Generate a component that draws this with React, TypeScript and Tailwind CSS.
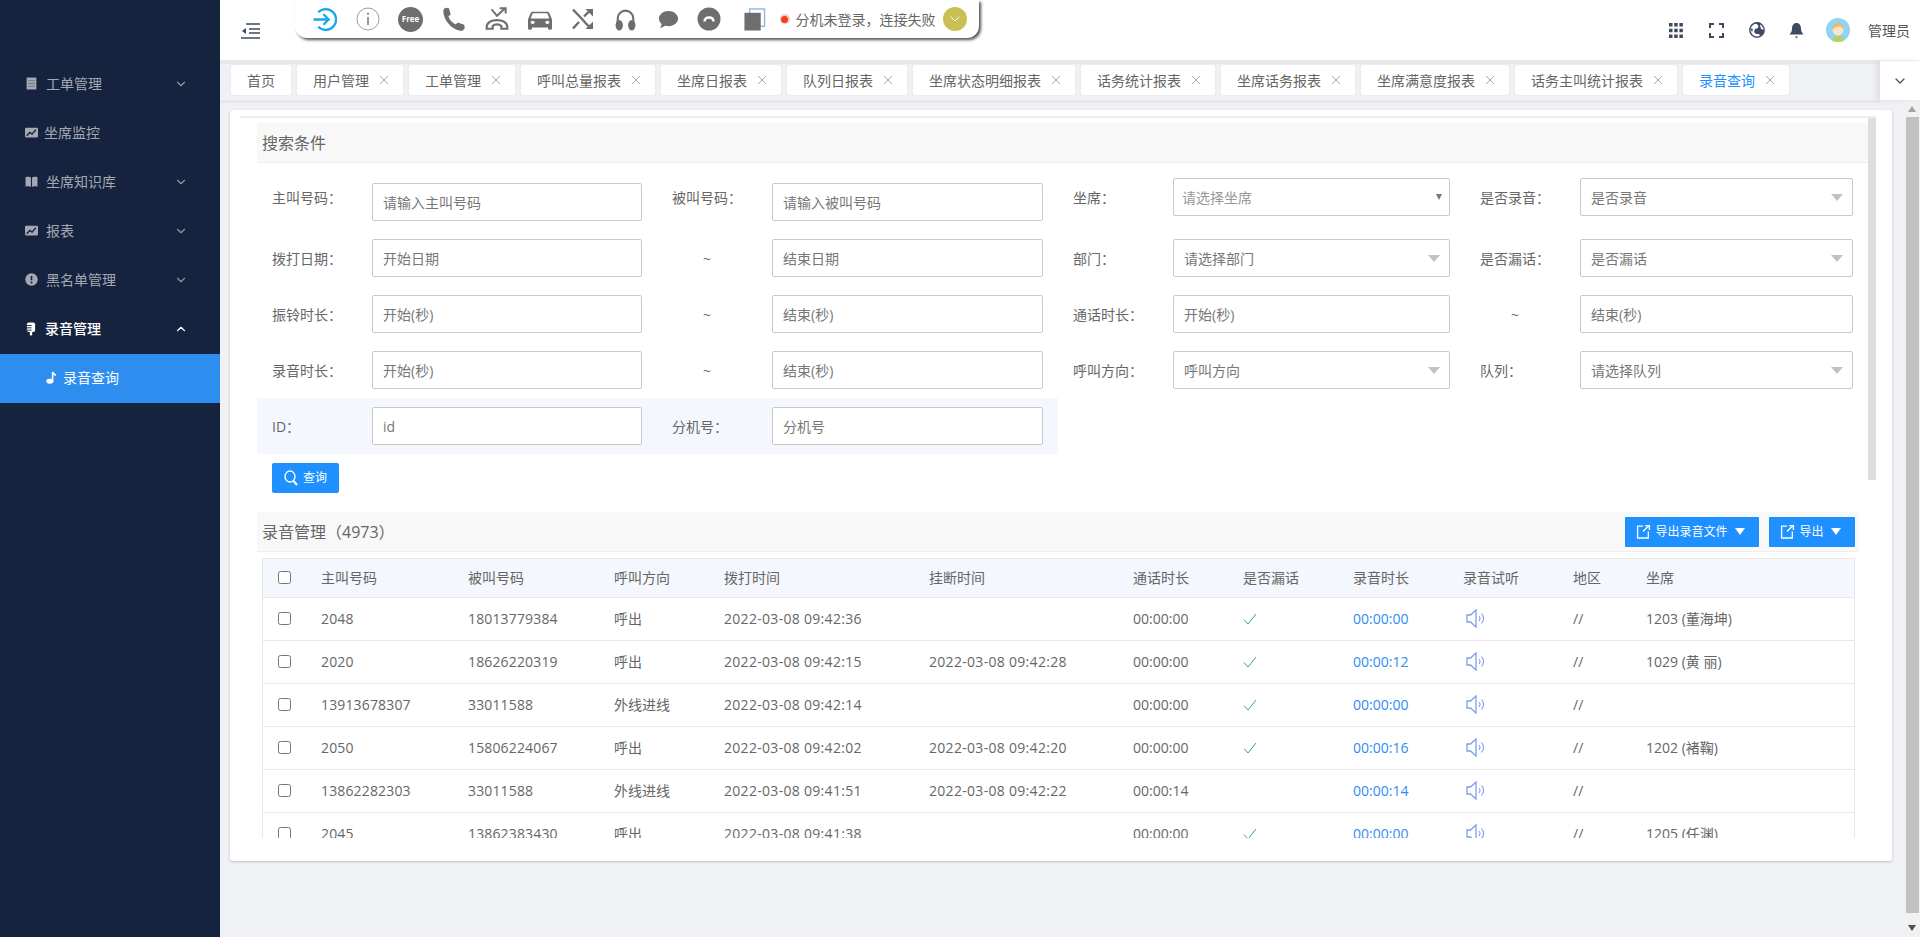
import { ChevronDown, ChevronUp } from 'lucide-react';
import type { ReactNode } from 'react';

const GRAY = '#6e6e6e';

function Svg({ size = 24, w, h, children }: { size?: number; w?: number; h?: number; children: ReactNode }) {
  return (
    <svg width={w ?? size} height={h ?? size} viewBox="0 0 24 24" preserveAspectRatio="none" className="shrink-0">
      {children}
    </svg>
  );
}

// 侧边栏小图标
function DocIcon() {
  return (
    <Svg size={13}>
      <rect x="3" y="1" width="18" height="22" fill="#a3a8b3" />
      <path d="M6 7h12M6 12h12M6 17h12" stroke="#6f7685" strokeWidth="2" />
    </Svg>
  );
}
function ChartIcon() {
  return (
    <Svg size={13}>
      <rect x="0" y="3" width="24" height="18" rx="2" fill="#a3a8b3" />
      <path d="M3 18l6-6 4 3 7-8" stroke="#16233f" strokeWidth="2.6" fill="none" />
    </Svg>
  );
}
function BookIcon() {
  return (
    <Svg size={13}>
      <path d="M1 4c4-1.500 8-1 10 .5V22c-2-1.500-6-2-10-.5zM23 4c-4-1.500-8-1-10 .5V22c2-1.500 6-2 10-.5z" fill="#a3a8b3" />
    </Svg>
  );
}
function AlertIcon() {
  return (
    <Svg size={13}>
      <circle cx="12" cy="12" r="11.500" fill="#a3a8b3" />
      <path d="M12 5.500v8" stroke="#16233f" strokeWidth="3" />
      <circle cx="12" cy="17.500" r="1.800" fill="#16233f" />
    </Svg>
  );
}
function MicIcon() {
  return (
    <Svg size={14}>
      <rect x="5" y="1" width="14" height="16" rx="3" fill="#fff" />
      <path d="M5 6h8M5 10h8M5 14h8" stroke="#16233f" strokeWidth="1.600" />
      <path d="M12 17v6" stroke="#fff" strokeWidth="4" />
    </Svg>
  );
}
function NoteIcon() {
  return (
    <Svg size={13}>
      <ellipse cx="9" cy="19" rx="6.500" ry="4.500" fill="#fff" />
      <path d="M14 19V2c1 3 3 4 6 6" stroke="#fff" strokeWidth="3" fill="none" />
    </Svg>
  );
}

const MENU = [
  { label: '工单管理', icon: <DocIcon />, arrow: true, textX: 'pl-[8px]' },
  { label: '坐席监控', icon: <ChartIcon />, arrow: false, textX: 'pl-[6px]' },
  { label: '坐席知识库', icon: <BookIcon />, arrow: true, textX: 'pl-[8px]' },
  { label: '报表', icon: <ChartIcon />, arrow: true, textX: 'pl-[8px]' },
  { label: '黑名单管理', icon: <AlertIcon />, arrow: true, textX: 'pl-[8px]' },
];

function Sidebar() {
  return (
    <aside className="w-[220px] shrink-0 bg-[#16233f] pt-[60px] text-[14px]">
      {MENU.map(item => (
        <div key={item.label} className="flex h-[49px] items-center pb-[2px] pl-[25px] pr-[32px] text-[#a3a8b3]">
          {item.icon}
          <span className={`flex-1 ${item.textX}`}>{item.label}</span>
          {item.arrow && <ChevronDown size={14} color="#8c98ac" />}
        </div>
      ))}
      <div className="flex h-[49px] items-center pb-[2px] pl-[24px] pr-[32px] font-medium text-white">
        <MicIcon />
        <span className="flex-1 pl-[7px]">录音管理</span>
        <ChevronUp size={14} color="#fff" />
      </div>
      <div className="flex h-[49px] items-center bg-[#2e8ef0] pb-[2px] pl-[45px] text-white">
        <NoteIcon />
        <span className="pl-[5px]">录音查询</span>
      </div>
    </aside>
  );
}

function ToolIcon({ children, className = '' }: { children: ReactNode; className?: string }) {
  return <div className={`flex w-[43px] shrink-0 items-center justify-center ${className}`}>{children}</div>;
}

function Toolbar() {
  return (
    <div className="ml-[35px] flex h-[38px] w-[684px] items-center rounded-b-[12px] bg-white pl-[8px] shadow-[2px_2px_3px_#555]">
      <ToolIcon>
        <Svg size={25}>
          <path d="M6 5a10 10 0 1 1 0 14" fill="none" stroke="#1aa7ec" strokeWidth="2.200" />
          <path d="M1.500 12h14M11 7l5 5-5 5" fill="none" stroke="#1aa7ec" strokeWidth="2.200" />
        </Svg>
      </ToolIcon>
      <ToolIcon>
        <Svg size={24}>
          <circle cx="12" cy="12" r="11" fill="none" stroke="#8a9099" strokeWidth="0.900" />
          <path d="M12 10v8" stroke={GRAY} strokeWidth="1.400" />
          <circle cx="12" cy="6.800" r="1" fill={GRAY} />
        </Svg>
      </ToolIcon>
      <ToolIcon>
        <div className="flex h-[25px] w-[25px] items-center justify-center rounded-full bg-[#6e6e6e] text-[8px] font-bold text-white">
          Free
        </div>
      </ToolIcon>
      <ToolIcon>
        <Svg size={27}>
          <path
            d="M4.500 1.500l3.500.5 1.500 5.500-2 1.700c1 3.500 3.500 6 6.500 7.300l1.800-1.800 5.700 2 .5 3-2 2.300C12 22.500 2.500 13 3 3.500z"
            fill={GRAY}
          />
        </Svg>
      </ToolIcon>
      <ToolIcon>
        <Svg size={26}>
          <path
            d="M2.500 21v-2.500C3.500 14.500 8 13 12 13s8.500 1.500 9.500 5.500V21H16v-2.500c-1-1-2.500-1.500-4-1.500s-3 .5-4 1.500V21z"
            fill="none"
            stroke={GRAY}
            strokeWidth="2"
          />
          <path d="M7 3l5 6 7-6.500M14.500 2h5.500v5" fill="none" stroke={GRAY} strokeWidth="1.800" />
        </Svg>
      </ToolIcon>
      <ToolIcon>
        <Svg w={32} h={27}>
          <path
            d="M18.920 6.010C18.720 5.420 18.160 5 17.500 5h-11c-.66 0-1.210.42-1.420 1.010L3 12v8c0 .55.45 1 1 1h1c.55 0 1-.45 1-1v-1h12v1c0 .55.45 1 1 1h1c.55 0 1-.45 1-1v-8l-2.080-5.990zM6.500 16c-.83 0-1.500-.67-1.500-1.500S5.670 13 6.500 13s1.500.67 1.500 1.500S7.330 16 6.500 16zm11 0c-.83 0-1.500-.67-1.500-1.500s.67-1.500 1.500-1.500 1.500.67 1.500 1.500-.67 1.500-1.500 1.500zM5 11l1.500-4.500h11L19 11H5z"
            fill={GRAY}
          />
        </Svg>
      </ToolIcon>
      <ToolIcon>
        <Svg size={24}>
          <path d="M2 2.500l9 9.500 4 4.500 5 5M2 21.500L8 15M13 9.500l7-7" fill="none" stroke={GRAY} strokeWidth="2.400" />
          <path d="M14.500 2H22v7.500zM14.500 22H22v-7.500z" fill={GRAY} />
        </Svg>
      </ToolIcon>
      <ToolIcon>
        <Svg size={25}>
          <path d="M4.500 17v-6a7.500 7.500 0 0 1 15 0v6" fill="none" stroke={GRAY} strokeWidth="2" />
          <ellipse cx="6" cy="17.500" rx="3.500" ry="5" fill={GRAY} />
          <ellipse cx="18" cy="17.500" rx="3.500" ry="5" fill={GRAY} />
        </Svg>
      </ToolIcon>
      <ToolIcon>
        <Svg size={23}>
          <path
            d="M12 3c5.500 0 10 3.600 10 8s-4.500 8-10 8c-1.200 0-2.300-.2-3.400-.5L3.500 21l1.300-4.300C3 15.200 2 13.200 2 11c0-4.400 4.500-8 10-8z"
            fill={GRAY}
          />
        </Svg>
      </ToolIcon>
      <ToolIcon className="-ml-[2.500px]">
        <Svg size={24}>
          <circle cx="12" cy="12" r="11.500" fill={GRAY} />
          <path d="M7.500 14.500c0-2.800 2-4 4.500-4s4.500 1.200 4.500 4" fill="none" stroke="#fff" strokeWidth="2.400" />
        </Svg>
      </ToolIcon>
      <div className="ml-[1.500px] flex w-[44px] shrink-0 items-center justify-center">
        <Svg size={23}>
          <rect x="7" y="1" width="15.500" height="18" fill="none" stroke="#8ab4e8" strokeWidth="1.400" />
          <rect x="1.500" y="5" width="17" height="18.500" fill={GRAY} />
        </Svg>
      </div>
      <div className="ml-[3.500px] flex h-[10px] w-[10px] items-center justify-center rounded-full bg-[#ffc9c0]">
        <div className="h-[7px] w-[7px] rounded-full bg-[#f0401a]" />
      </div>
      <span className="ml-[6px] w-[140px] whitespace-nowrap text-[14px] text-[#666]">分机未登录，连接失败</span>
      <div className="ml-[7px] flex h-[24px] w-[24px] items-center justify-center rounded-full bg-[#c8bf55]">
        <ChevronDown size={16} color="#fff" strokeWidth={1.500} />
      </div>
    </div>
  );
}

function Header() {
  return (
    <header className="flex h-[60px] shrink-0 items-start bg-white pl-[21px]">
      <div className="mt-[23px]">
        <svg width="19" height="16" viewBox="0 0 19 16" className="block">
          <path d="M5 1h14M8 6h11M8 10h11M0 15h19" stroke="#3e4a5f" strokeWidth="1.600" />
          <path d="M5 5L1 8l4 3z" fill="#3e4a5f" />
        </svg>
      </div>
      <Toolbar />
      <div className="ml-auto flex h-[60px] items-center pr-[10px] text-[14px] text-[#555]">
        <svg width="14" height="15" viewBox="0 0 14 15" className="mr-[26px]">
          <path d="M0 0h3.500v3.500H0zM5.200 0h3.500v3.500H5.200zM10.400 0h3.500v3.500h-3.500zM0 5.700h3.500v3.500H0zM5.200 5.700h3.500v3.500H5.200zM10.400 5.700h3.500v3.500h-3.500zM0 11.400h3.500v3.500H0zM5.200 11.400h3.500v3.500H5.200zM10.400 11.400h3.500v3.500h-3.500z" fill="#3e4a5f" />
        </svg>
        <svg width="15" height="15" viewBox="0 0 15 15" className="mr-[25px]">
          <path d="M1 5V1h4M10 1h4v4M14 10v4h-4M5 14H1v-4" fill="none" stroke="#3e4a5f" strokeWidth="2" />
        </svg>
        <svg width="16" height="16" viewBox="0 0 16 16" className="mr-[24px]">
          <circle cx="8" cy="8" r="7.200" fill="#fff" stroke="#3e4a5f" strokeWidth="1.400" />
          <path d="M6 1c3 1 4 3 3 5L6 7 5 10l2 2 3 0 1 2c3-1 4-3 4-6l-3-1-1-4 1-2C10 .5 8 0 6 1zM1 6l3 1-1 3z" fill="#3e4a5f" />
        </svg>
        <svg width="15" height="17" viewBox="0 0 15 17" className="mr-[22px]">
          <path d="M7.500 1C4.500 1 3 3.500 3 6.500c0 3-1 4.500-2.500 6h14C13 11 12 9.500 12 6.500 12 3.500 10.500 1 7.500 1z" fill="#3e4a5f" />
          <path d="M6 14.500h3l-1.500 2z" fill="#3e4a5f" />
        </svg>
        <svg width="24" height="24" viewBox="0 0 24 24" className="mr-[18px] rounded-full">
          <rect width="24" height="24" fill="#8fd4f2" />
          <path d="M6 24c0-4 2.500-6 6-6s6 2 6 6z" fill="#b4d45c" />
          <circle cx="12" cy="12" r="5.500" fill="#fde3c8" />
          <path d="M6.500 12C6.500 7.500 9 5 12 5s5.500 2.500 5.500 7c-1-2.500-2.500-3.500-4.500-3.500S8 9.500 6.500 12z" fill="#f0b860" />
        </svg>
        <span>管理员</span>
      </div>
    </header>
  );
}

const TABS = [
  '首页',
  '用户管理',
  '工单管理',
  '呼叫总量报表',
  '坐席日报表',
  '队列日报表',
  '坐席状态明细报表',
  '话务统计报表',
  '坐席话务报表',
  '坐席满意度报表',
  '话务主叫统计报表',
  '录音查询',
];

function TabBar() {
  return (
    <div className="flex h-[43px] shrink-0 bg-[#f0f1f5]">
      <div className="flex flex-1 gap-[6px] border-t-[4px] border-b-[3px] border-t-[#e7e8ec] border-b-[#e7e8ec] pl-[11px] pt-[1px]">
        {TABS.map((tab, i) => (
          <div
            key={tab}
            className={`flex h-[30px] items-center rounded-[3px] bg-white pl-[16px] text-[14px] shadow-[0_0_2px_rgba(0,0,0,0.08)] ${
              i === 0 ? 'pr-[16px]' : 'pr-[14px]'
            } ${i === TABS.length - 1 ? 'text-[#1e90ff]' : 'text-[#666]'}`}
          >
            {tab}
            {i > 0 && (
              <svg width="10" height="10" viewBox="0 0 10 10" className="ml-[10px]">
                <path d="M1 1l8 8M9 1l-8 8" stroke="#aaa" strokeWidth="1" />
              </svg>
            )}
          </div>
        ))}
      </div>
      <div className="mb-[3px] mt-[1px] flex w-[40px] items-center justify-center bg-white shadow-[-4px_0_6px_rgba(0,0,0,0.07)]">
        <ChevronDown size={16} color="#46556e" />
      </div>
    </div>
  );
}

function TextInput({ placeholder, className = '' }: { placeholder: string; className?: string }) {
  return (
    <input
      readOnly
      placeholder={placeholder}
      className={`h-[38px] w-full rounded-[2px] border border-[#c9c9c9] bg-white px-[10px] text-[14px] outline-none placeholder:text-[#777] ${className}`}
    />
  );
}

function SelectBox({ text, className = '' }: { text: string; className?: string }) {
  return (
    <div
      className={`flex h-[38px] w-full items-center justify-between rounded-[2px] border border-[#c9c9c9] bg-white pl-[10px] pr-[9px] text-[14px] text-[#777] ${className}`}
    >
      <span>{text}</span>
      <span className="h-0 w-0 border-x-[6px] border-t-[7px] border-x-transparent border-t-[#c2c2c2]" />
    </div>
  );
}

function Label({ children, className = '' }: { children: ReactNode; className?: string }) {
  return <label className={`text-[14px] text-[#666] ${className}`}>{children}</label>;
}

function Tilde() {
  return <div className="text-center text-[14px] text-[#666]">~</div>;
}

const ROW_GRID = 'grid h-[56px] grid-cols-[115px_270px_130px_271px_130px_277px_130px_273px] items-center';

function SearchForm() {
  return (
    <div className="pt-[11px]">
      <div className={ROW_GRID}>
        <Label className="mb-[10px] pl-[15px]">主叫号码：</Label>
        <TextInput placeholder="请输入主叫号码" />
        <Label className="mb-[10px] pl-[30px]">被叫号码：</Label>
        <TextInput placeholder="请输入被叫号码" />
        <Label className="mb-[10px] pl-[30px]">坐席：</Label>
        <div className="mb-[10px] flex h-[38px] items-center justify-between rounded-[2px] border border-[#c9c9c9] pl-[8px] pr-[7px] text-[14px] text-[#999]">
          <span>请选择坐席</span>
          <span className="h-0 w-0 border-x-[3.500px] border-t-[6px] border-x-transparent border-t-[#777]" />
        </div>
        <Label className="mb-[10px] pl-[30px]">是否录音：</Label>
        <SelectBox text="是否录音" className="mb-[10px]" />
      </div>
      <div className={ROW_GRID}>
        <Label className="pl-[15px]">拨打日期：</Label>
        <TextInput placeholder="开始日期" />
        <Tilde />
        <TextInput placeholder="结束日期" />
        <Label className="pl-[30px]">部门：</Label>
        <SelectBox text="请选择部门" />
        <Label className="pl-[30px]">是否漏话：</Label>
        <SelectBox text="是否漏话" />
      </div>
      <div className={ROW_GRID}>
        <Label className="pl-[15px]">振铃时长：</Label>
        <TextInput placeholder="开始(秒)" />
        <Tilde />
        <TextInput placeholder="结束(秒)" />
        <Label className="pl-[30px]">通话时长：</Label>
        <TextInput placeholder="开始(秒)" />
        <Tilde />
        <TextInput placeholder="结束(秒)" />
      </div>
      <div className={ROW_GRID}>
        <Label className="pl-[15px]">录音时长：</Label>
        <TextInput placeholder="开始(秒)" />
        <Tilde />
        <TextInput placeholder="结束(秒)" />
        <Label className="pl-[30px]">呼叫方向：</Label>
        <SelectBox text="呼叫方向" />
        <Label className="pl-[30px]">队列：</Label>
        <SelectBox text="请选择队列" />
      </div>
      <div className="grid h-[56px] w-[801px] grid-cols-[115px_270px_130px_271px] items-center bg-[#f4f7fd]">
        <Label className="pl-[15px]">ID：</Label>
        <TextInput placeholder="id" />
        <Label className="pl-[30px]">分机号：</Label>
        <TextInput placeholder="分机号" />
      </div>
      <button
        type="button"
        className="ml-[15px] mt-[9px] flex h-[30px] w-[67px] items-center justify-center gap-[5px] rounded-[2px] bg-[#1e90ff] text-[12px] text-white"
      >
        <svg width="14" height="16" viewBox="0 0 14 16">
          <ellipse cx="6" cy="6.500" rx="5" ry="5.500" fill="none" stroke="#fff" strokeWidth="1.400" />
          <path d="M9.500 11l3.500 4" stroke="#fff" strokeWidth="2" />
        </svg>
        查询
      </button>
    </div>
  );
}

function ExportButton({ text, width }: { text: string; width: string }) {
  return (
    <button
      type="button"
      className={`flex h-[30px] items-center justify-center gap-[4px] rounded-[1px] bg-[#1e90ff] text-[12px] text-white ${width}`}
    >
      <svg width="15" height="15" viewBox="0 0 13 14" className="-ml-[3px]">
        <path d="M6 2H1v11h10V7" fill="none" stroke="#fff" strokeWidth="1.300" />
        <path d="M6 7l5-5M8 1.500h4v4" fill="none" stroke="#fff" strokeWidth="1.300" />
      </svg>
      {text}
      <span className="ml-[3px] h-0 w-0 border-x-[5.500px] border-t-[7px] border-x-transparent border-t-white" />
    </button>
  );
}

function SpeakerIcon() {
  return (
    <svg width="19" height="19" viewBox="0 0 19 19" className="ml-[3px] block">
      <path d="M1 6h3.500L10 1v17l-5.500-5H1z" fill="none" stroke="#7f9cf0" strokeWidth="1.300" />
      <path d="M13 7c1.200 1.500 1.200 3.500 0 5M15.500 4.500c2.500 3 2.500 7 0 10" fill="none" stroke="#7f9cf0" strokeWidth="1.100" />
    </svg>
  );
}

const COLUMNS = ['主叫号码', '被叫号码', '呼叫方向', '拨打时间', '挂断时间', '通话时长', '是否漏话', '录音时长', '录音试听', '地区', '坐席'];

const ROWS = [
  ['2048', '18013779384', '呼出', '2022-03-08 09:42:36', '', '00:00:00', true, '00:00:00', '1203 (董海坤)'],
  ['2020', '18626220319', '呼出', '2022-03-08 09:42:15', '2022-03-08 09:42:28', '00:00:00', true, '00:00:12', '1029 (黄 丽)'],
  ['13913678307', '33011588', '外线进线', '2022-03-08 09:42:14', '', '00:00:00', true, '00:00:00', ''],
  ['2050', '15806224067', '呼出', '2022-03-08 09:42:02', '2022-03-08 09:42:20', '00:00:00', true, '00:00:16', '1202 (褚鞠)'],
  ['13862282303', '33011588', '外线进线', '2022-03-08 09:41:51', '2022-03-08 09:42:22', '00:00:14', false, '00:00:14', ''],
  ['2045', '13862383430', '呼出', '2022-03-08 09:41:38', '', '00:00:00', true, '00:00:00', '1205 (任渊)'],
] as const;

function RecordTable() {
  return (
    <div className="ml-[5px] mt-[6px] h-[280px] w-[1593px] overflow-hidden border-x border-t border-[#e8e8e8]">
      <table className="w-full table-fixed border-collapse text-[14px] text-[#666]">
        <colgroup>
          <col className="w-[43px]" />
          <col className="w-[147px]" />
          <col className="w-[146px]" />
          <col className="w-[110px]" />
          <col className="w-[205px]" />
          <col className="w-[204px]" />
          <col className="w-[110px]" />
          <col className="w-[110px]" />
          <col className="w-[110px]" />
          <col className="w-[110px]" />
          <col className="w-[73px]" />
          <col />
        </colgroup>
        <thead>
          <tr className="h-[38px] border-b border-[#e8e8e8] bg-[#f4f7fd]">
            <th className="pl-[15px] text-left font-normal">
              <input type="checkbox" className="block" readOnly />
            </th>
            {COLUMNS.map(col => (
              <th key={col} className="pl-[15px] text-left font-normal">
                {col}
              </th>
            ))}
          </tr>
        </thead>
        <tbody>
          {ROWS.map(row => (
            <tr key={row[3]} className="h-[43px] border-b border-[#e8e8e8]">
              <td className="pl-[15px]">
                <input type="checkbox" className="block" readOnly />
              </td>
              <td className="pl-[15px] tracking-[0.15px]">{row[0]}</td>
              <td className="pl-[15px] tracking-[0.15px]">{row[1]}</td>
              <td className="pl-[15px]">{row[2]}</td>
              <td className="pl-[15px] tracking-[0.3px]">{row[3]}</td>
              <td className="pl-[15px] tracking-[0.3px]">{row[4]}</td>
              <td className="pl-[15px]">{row[5]}</td>
              <td className="pl-[15px]">
                {row[6] && (
                  <svg width="14" height="14" viewBox="0 0 14 14" className="block">
                    <path d="M1 7.500l4 4.500L13 2" fill="none" stroke="#3aa76d" strokeWidth="1" />
                  </svg>
                )}
              </td>
              <td className="pl-[15px] text-[#2f8cf5]">{row[7]}</td>
              <td className="pl-[15px]">
                <SpeakerIcon />
              </td>
              <td className="pl-[15px]">//</td>
              <td className="pl-[15px]">{row[8]}</td>
            </tr>
          ))}
        </tbody>
      </table>
    </div>
  );
}

function PageScrollbar() {
  return (
    <div className="flex w-[16px] shrink-0 flex-col items-center bg-[#f1f1f1] pt-[3px]">
      <span className="h-0 w-0 border-x-[4px] border-b-[6px] border-x-transparent border-b-[#a3a3a3]" />
      <div className="mt-[5px] h-[796px] w-[13px] bg-[#c1c1c1]" />
      <span className="mt-[12px] h-0 w-0 border-x-[4px] border-t-[6px] border-x-transparent border-t-[#505050]" />
    </div>
  );
}

export default function App() {
  return (
    <div className="flex h-[937px] w-full overflow-hidden bg-[#f0f1f5] [font-family:'Open_Sans','Noto_Sans_CJK_SC',sans-serif]">
      <Sidebar />
      <main className="flex min-w-0 flex-1 flex-col">
        <Header />
        <TabBar />
        <div className="flex min-h-0 flex-1">
          <div className="flex-1 pl-[10px] pr-[12px] pt-[7px]">
            <section className="relative h-[751px] rounded-[3px] bg-white pl-[27px] pt-[6px] shadow-[0_1px_3px_rgba(0,0,0,0.2)]">
              <div className="absolute left-[10px] right-[16px] top-[6px] h-[2px] bg-[#eeeeee]" />
              <div className="absolute right-[16px] top-[8px] h-[362px] w-[8px] bg-[#dedede]" />
              <div className="mr-[24px] mt-[7px] flex h-[40px] items-center border-b border-[#eeeeee] bg-[#f8f8f8] pl-[5px] text-[16px] text-[#666]">
                搜索条件
              </div>
              <SearchForm />
              <div className="mr-[33px] mt-[19px] flex h-[40px] items-center justify-between border-b border-[#eeeeee] bg-[#f8f8f8] pl-[5px] text-[16px] text-[#666]">
                <span>录音管理（4973）</span>
                <div className="flex gap-[10px] pr-[4px]">
                  <ExportButton text="导出录音文件" width="w-[134px]" />
                  <ExportButton text="导出" width="w-[86px]" />
                </div>
              </div>
              <RecordTable />
            </section>
          </div>
          <PageScrollbar />
        </div>
      </main>
    </div>
  );
}
